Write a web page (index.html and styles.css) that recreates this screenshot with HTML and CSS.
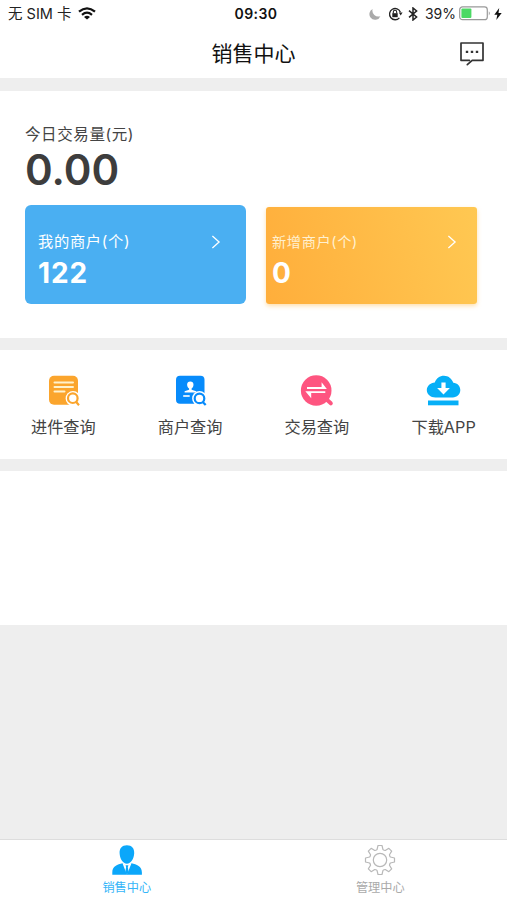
FILE: index.html
```html
<!DOCTYPE html>
<html lang="zh-CN">
<head>
<meta charset="utf-8">
<meta name="viewport" content="width=device-width, initial-scale=1">
<title>销售中心</title>
<link rel="stylesheet" href="styles.css">
</head>
<body>
<div class="app">
  <div class="status">
    <div class="status-left">
      <span>无 SIM 卡</span>
      <svg class="wifi" width="18" height="13" viewBox="0 0 18 13"><g fill="none" stroke="#111"><path d="M1 4.7Q9-2 17 4.7" stroke-width="2.3"/><path d="M4 7.8Q9 3.6 14 7.8" stroke-width="2.2"/></g><path d="M6 9.9Q9 7.5 12 9.9L9 12.5Z" fill="#111"/></svg>
    </div>
    <time class="clock">09:30</time>
    <div class="status-right">
      <svg width="12" height="12" viewBox="0 0 12 12"><path d="M3.6 1A6 6 0 0 0 11.4 8.200A5.700 5.700 0 0 1 1.500 9.500A5.700 5.700 0 0 1 3.600 1Z" fill="#aaa"/></svg>
      <svg class="lock" width="15" height="14" viewBox="0 0 15 14"><path d="M11.4 10.8A5.6 5.6 0 1 1 12.4 5.2" fill="none" stroke="#222" stroke-width="1.3"/><path d="M10.8 5.6h3.8l-1.9 3z" fill="#222"/><rect x="4.3" y="6.2" width="5.4" height="4" fill="#222"/><path d="M5.3 6.5V5a1.7 1.7 0 0 1 3.4 0v1.5" fill="none" stroke="#222" stroke-width="1.1"/></svg>
      <svg class="bluetooth" width="10" height="14" viewBox="0 0 10 14"><path d="M1 3.7 8.6 10 5 13V1L8.6 4 1 10.3" fill="none" stroke="#222" stroke-width="1.5"/></svg>
      <span class="percent">39%</span>
      <svg class="battery" width="32" height="15" viewBox="0 0 32 15"><rect x=".7" y=".9" width="27.6" height="12.8" rx="2.8" fill="#fff" stroke="#999" stroke-width="1.2"/><rect x="2.4" y="2.6" width="10" height="9.4" rx="1" fill="#4cd964"/><path d="M29.8 5.2q2 2 0 4.2z" fill="#999"/></svg>
      <svg class="bolt" width="8" height="12" viewBox="0 0 8 12"><path d="M5.2 0 .3 6.7h3L2.3 12 7.7 4.9H4.5Z" fill="#111"/></svg>
    </div>
  </div>
  <header class="header">
    <h1>销售中心</h1>
    <svg class="message" width="26" height="26" viewBox="0 0 26 26"><path d="M10.400 19.300H2V2h22v17.300H13.200L8.300 23.600" fill="none" stroke="#333" stroke-width="1.7" stroke-linejoin="round" stroke-linecap="round"/><path d="M6.800 9.700h2.400v2.300H6.800zm5 0h2.400v2.300h-2.400zm5 0h2.400v2.300h-2.400z" fill="#333"/></svg>
  </header>

  <section class="summary">
    <div class="label">今日交易量(元)</div>
    <div class="total">0.00</div>
    <div class="cards">
      <a class="card card-blue">
        <span class="card-title">我的商户(个)</span>
        <span class="card-value">122</span>
        <svg class="chevron" width="10" height="14" viewBox="0 0 10 14"><path d="m1.400 1 6.700 6-6.700 6" fill="none" stroke="#fff" stroke-width="1.3"/></svg>
      </a>
      <a class="card card-orange">
        <span class="card-title">新增商户(个)</span>
        <span class="card-value">0</span>
        <svg class="chevron" width="10" height="14" viewBox="0 0 10 14"><path d="m1.400 1 6.700 6-6.700 6" fill="none" stroke="#fff" stroke-width="1.3"/></svg>
      </a>
    </div>
  </section>

  <nav class="actions">
    <a class="action">
      <svg width="36" height="36" viewBox="0 0 36 36"><rect x="3" y="2.700" width="29" height="29" rx="5" fill="#fba52d"/><path d="M8.500 9.500H27M8.500 14H27M8.500 18.500h10" stroke="#fff2cc" stroke-width="2" stroke-linecap="round"/><circle cx="27" cy="25.400" r="7.400" fill="#fff"/><circle cx="26.800" cy="25.200" r="4.800" fill="none" stroke="#fba52d" stroke-width="2.200"/><path d="m30 28.700 3 3.500" stroke="#fba52d" stroke-width="2.200"/></svg>
      <span>进件查询</span>
    </a>
    <a class="action">
      <svg width="36" height="36" viewBox="0 0 36 36"><rect x="3" y="2.700" width="28.500" height="28" rx="4" fill="#078bfb"/><path d="M17.300 8.500c-4.200 0-3.800 5.200-1.200 7v1.300l-4.500 1.500v1.200h11.600v-1.200l-4.600-1.500v-1.300c2.600-1.800 2.900-7-1.300-7Z" fill="#fff"/><path d="M10.200 23h6.500" stroke="#fff" stroke-width="1.600"/><circle cx="26.500" cy="25.400" r="7.400" fill="#fff"/><circle cx="26.500" cy="25.400" r="4.800" fill="none" stroke="#078bfb" stroke-width="2.200"/><path d="m29.700 28.900 3 3.200" stroke="#078bfb" stroke-width="2.200"/></svg>
      <span>商户查询</span>
    </a>
    <a class="action">
      <svg width="36" height="36" viewBox="0 0 36 36"><circle cx="17.200" cy="17.500" r="15.300" fill="#fe5580"/><path d="m26.500 25.500 5.300 4.800" stroke="#fe5580" stroke-width="4" stroke-linecap="round"/><path d="M8 15h18L23.500 11.800v3M26.300 19.200h-18l3 3.500v-3" fill="none" stroke="#fff" stroke-width="1.800"/></svg>
      <span>交易查询</span>
    </a>
    <a class="action">
      <svg width="36" height="36" viewBox="0 0 36 36"><path d="M9.500 24.500h17.300c4.200 0 7.500-3.300 7.500-7.400 0-4-3-7.200-7-7.400C25.800 5.500 22.200 2.700 18 2.700S10.200 5.300 8.800 9.400C4.400 9.600.8 12.900.8 17c0 4.200 3.700 7.500 8.700 7.500Z" fill="#06aff7"/><path d="M15.400 9.500h4.200v5.600h4.300l-6.400 6.500-6.400-6.500h4.300Z" fill="#fff"/><path d="M2 27.500h30.500v4.800H2z" fill="#06aff7"/></svg>
      <span>下载APP</span>
    </a>
  </nav>

  <section class="blank"></section>

  <footer class="tabs">
    <a class="tab tab-active">
      <svg width="32" height="32" viewBox="0 0 32 32"><path d="M15.900 1.200c-5 0-7.500 3-7.300 8.100.3 5.500 3.200 10.400 7.300 10.400s7-4.900 7.300-10.400c.2-5.100-2.300-8.100-7.300-8.100Z" fill="#0ba7fa"/><path d="M11.500 19.200C6.500 20.500 1.300 22 1.300 28.500v2.200h29.600v-2.200c0-6.500-5.400-8-10.400-9.300L16 23Z" fill="#0ba7fa"/><path d="m11.500 19.300 4.400 11.400 4.600-11.400-4.500 2.200Z" fill="#fff"/><path d="m14.600 21.300h2.800l-.6 2 .9 4.900-1.800 2.500-1.700-2.500.9-4.900Z" fill="#0ba7fa"/></svg>
      <span>销售中心</span>
    </a>
    <a class="tab">
      <svg width="32" height="32" viewBox="-16 -16 32 32"><g fill="none" stroke="#b8b8b8" stroke-width="1.200" stroke-linejoin="round"><path d="M-3-10.400-2-14.500H2L3-10.400Q4-9.500 5.230-9.480L8.840-11.670 11.670-8.840 9.480-5.230Q9.500-4 10.400-3L14.500-2V2L10.400 3Q9.500 4 9.480 5.230L11.670 8.840 8.840 11.670 5.230 9.480Q4 9.500 3 10.400L2 14.500H-2L-3 10.400Q-4 9.500-5.230 9.480L-8.840 11.670-11.670 8.840-9.480 5.230Q-9.500 4-10.400 3L-14.500 2V-2L-10.400-3Q-9.500-4-9.480-5.230L-11.670-8.840-8.840-11.670-5.230-9.480Q-4-9.500-3-10.400Z"/><circle r="6.700"/></g></svg>
      <span>管理中心</span>
    </a>
  </footer>
</div>
</body>
</html>
```

FILE: styles.css
```css
* { box-sizing: border-box; }
body {
  margin: 0;
  background: #eee;
  color: #444;
  font-family: Inter, "Noto Sans CJK SC", sans-serif;
}
svg { display: block; flex: none; }
.app { height: 900px; display: flex; flex-direction: column; }

.status {
  height: 28px;
  padding: 0 5px 0 8px;
  display: grid;
  grid-template-columns: 1fr auto 1fr;
  align-items: center;
  background: #fff;
  color: #222;
  font-size: 14px;
  line-height: 28px;
  white-space: nowrap;
}
.status-left, .status-right { display: flex; align-items: center; }
.status-left { gap: 7px; font-size: 14.5px; }
.wifi { margin-top: -2px; }
.status-right { justify-content: flex-end; }
.clock { margin-left: 2px; font-weight: 600; letter-spacing: .4px; color: #111; }
.lock { margin-left: 7px; }
.bluetooth { margin-left: 5px; }
.percent { margin-left: 7px; }
.battery { margin-left: 3px; margin-top: -1px; }
.bolt { margin-left: 3px; }

.header {
  height: 50px;
  padding-right: 22px;
  display: grid;
  grid-template-columns: 1fr auto 1fr;
  align-items: center;
  background: #fff;
}
.header h1 {
  grid-column: 2;
  margin: 1px -22px 0 0;
  font-size: 21px;
  line-height: 49px;
  font-weight: 400;
  color: #111;
}
.message { justify-self: end; margin-top: 2px; }

.summary {
  height: 247px;
  margin-top: 13px;
  padding: 32px 30px 0 25px;
  background: #fff;
}
.label { font-size: 15.5px; line-height: 24px; letter-spacing: .6px; }
.total {
  height: 48px;
  line-height: 46px;
  font-size: 42px;
  font-weight: 600;
  color: #3d3d3d;
}
.cards { display: flex; gap: 20px; margin-top: 10px; align-items: flex-end; }
.card {
  display: grid;
  grid-template-columns: 1fr auto;
  align-content: start;
  color: #fff;
}
.card-blue {
  width: 221px;
  height: 99px;
  padding: 25px 25px 0 13px;
  border-radius: 6px;
  background: #4aaff2;
}
.card-orange {
  flex: 1;
  height: 97px;
  padding: 23px 20px 0 6px;
  border-radius: 3px;
  background: linear-gradient(75deg, #ffae3b, #ffc852);
  box-shadow: 0 2px 4px #ffc46688;
}
.card-title { font-size: 15.3px; line-height: 24px; letter-spacing: .65px; }
.card-orange .card-title { font-size: 14.2px; color: #fff0d0; }
.card-value { grid-column: 1; font-size: 28px; line-height: 38px; font-weight: 700; letter-spacing: .9px; }
.chevron { grid-column: 2; grid-row: 1; align-self: center; }

.actions {
  height: 109px;
  margin-top: 12px;
  padding-top: 23px;
  display: grid;
  grid-template-columns: repeat(4, 1fr);
  background: #fff;
}
.action { display: flex; flex-direction: column; align-items: center; font-size: 16.2px; line-height: 24px; }
.action svg { margin-left: 1px; }
.action span { margin-top: 6px; }

.blank { height: 154px; margin-top: 12px; background: #fff; }

.tabs {
  height: 61px;
  margin-top: auto;
  padding-top: 4px;
  display: grid;
  grid-template-columns: 1fr 1fr;
  border-top: 1px solid #ddd;
  background: #fff;
}
.tab { display: flex; flex-direction: column; align-items: center; font-size: 12.2px; line-height: 18px; color: #aaa; }
.tab span { margin-top: 3px; }
.tab-active { color: #35b5f8; }
```
